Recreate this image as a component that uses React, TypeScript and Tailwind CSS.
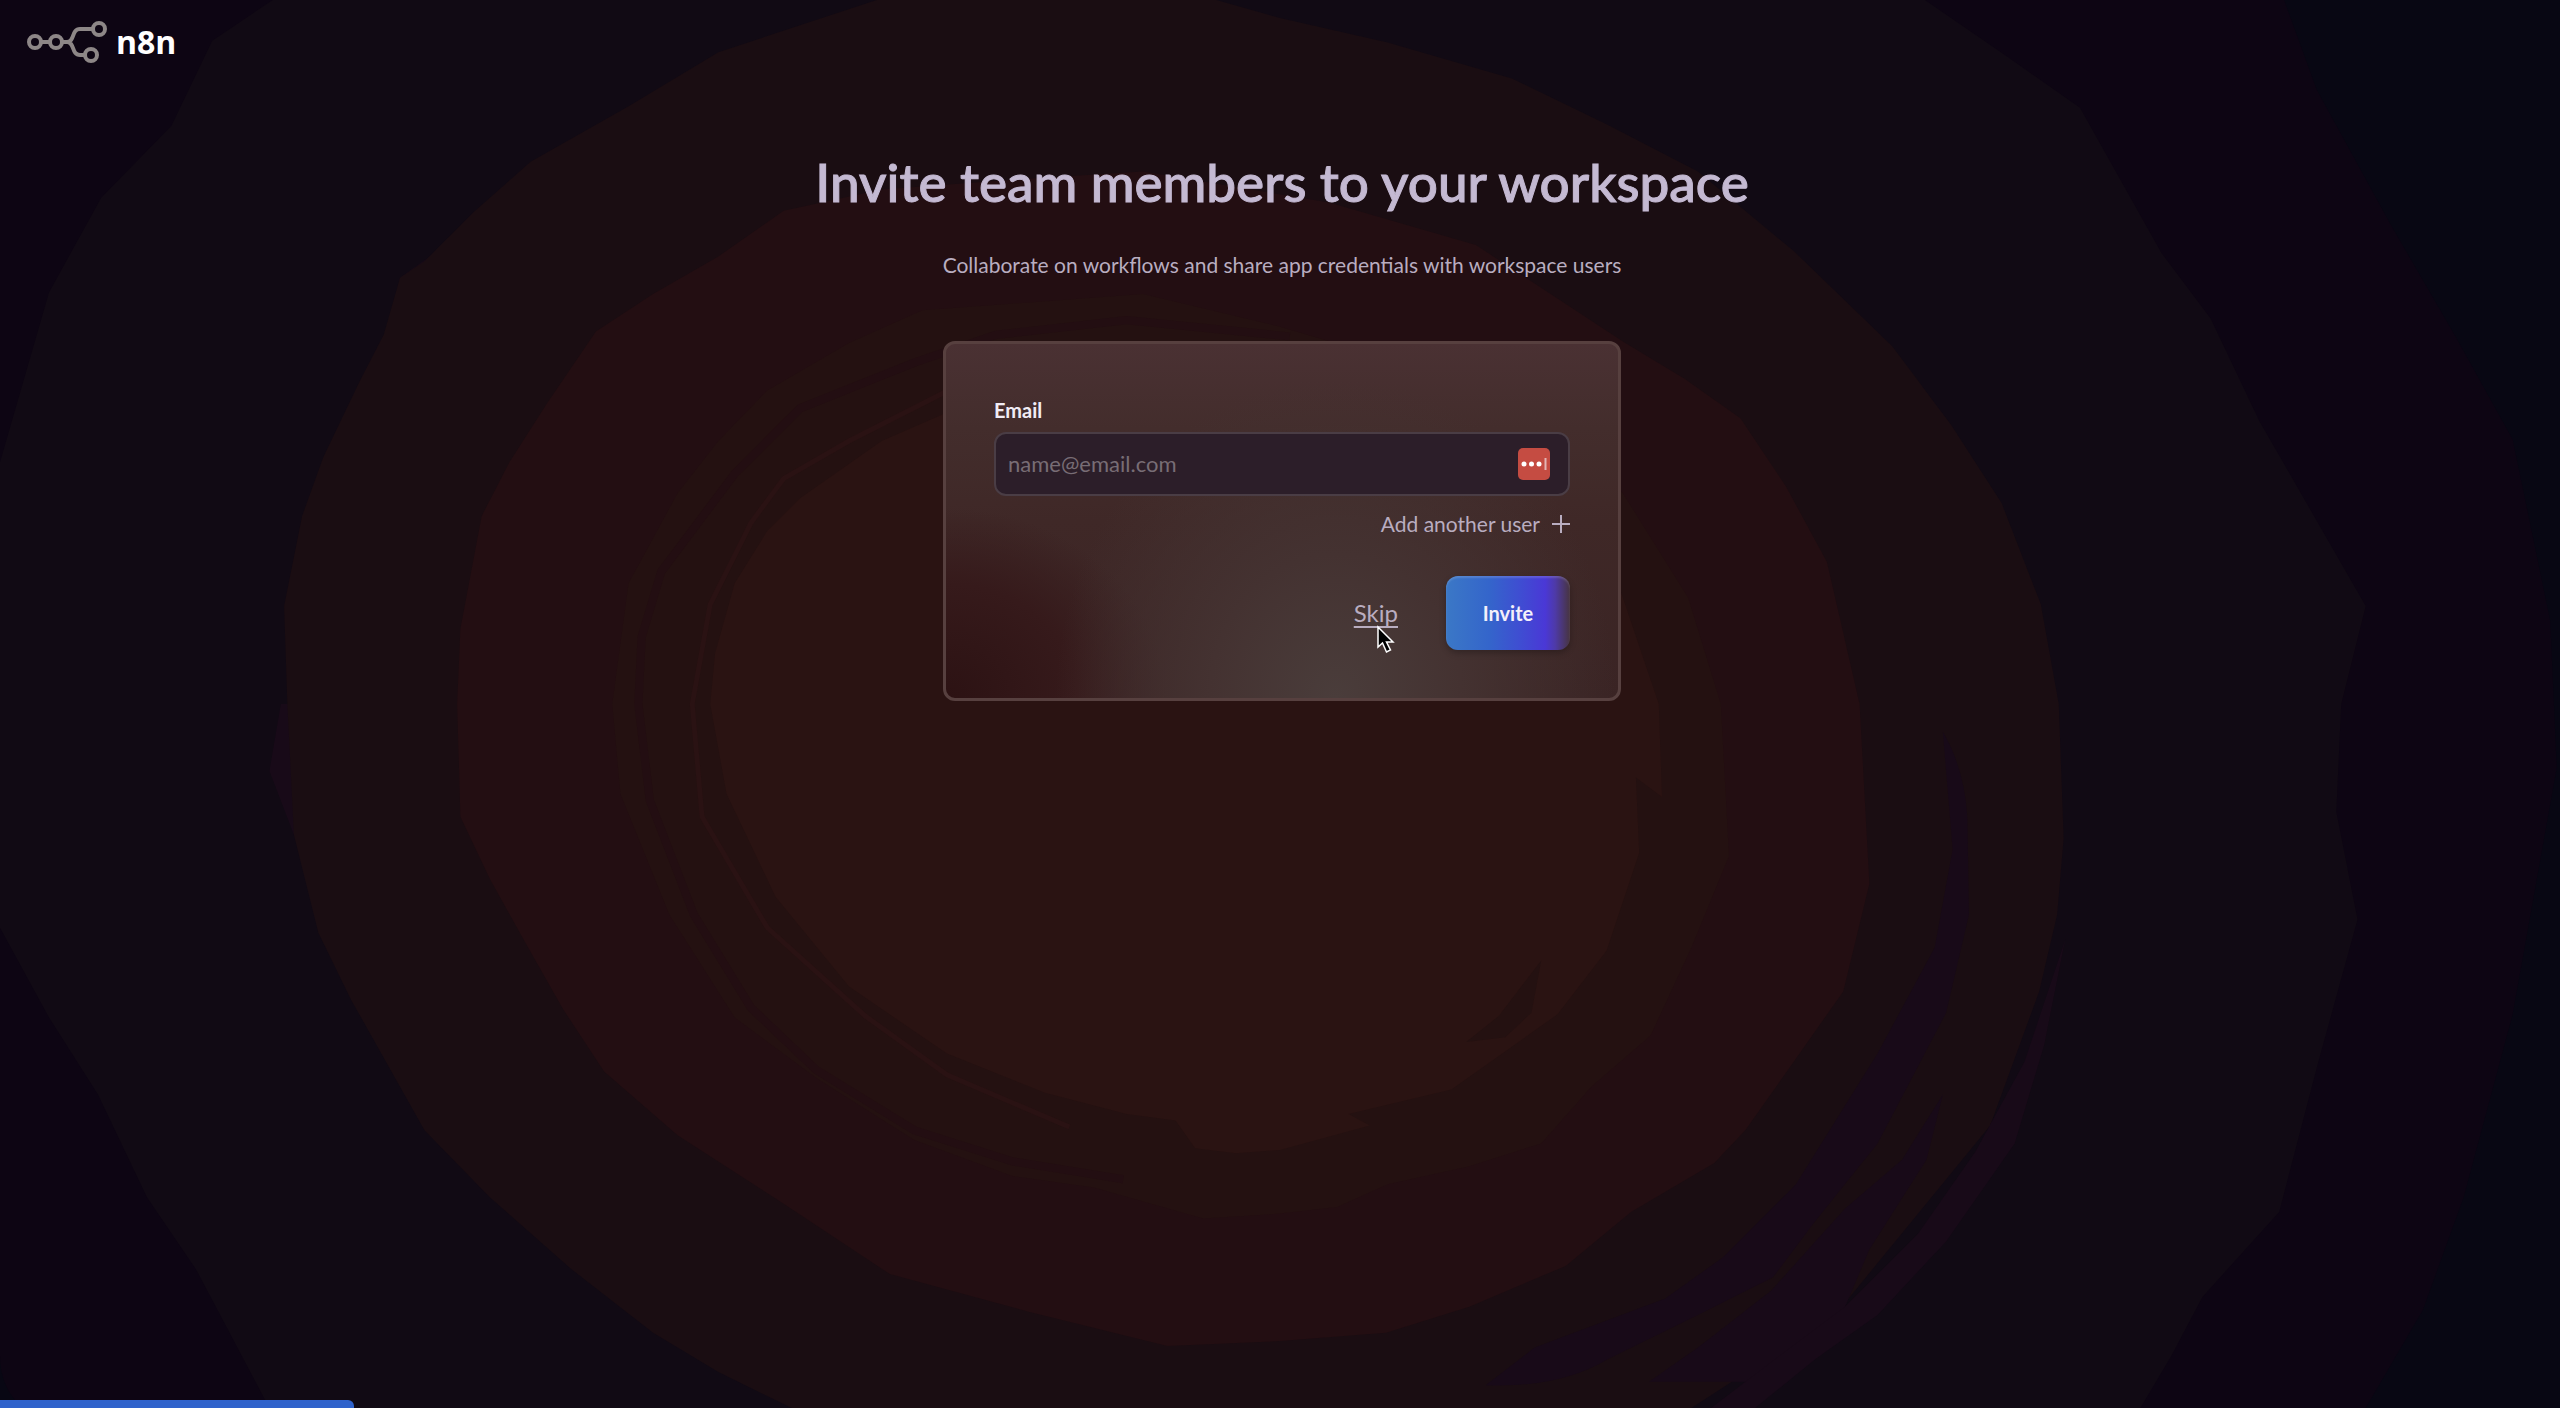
import { useState } from "react";

function Backdrop() {
  return (
    <svg
      className="absolute inset-0 -z-10 h-full w-full"
      viewBox="0 0 1568 862"
      preserveAspectRatio="none"
      aria-hidden="true"
    >
      <rect width="1568" height="862" fill="#080713" />
      <path
        fill="#0d0513"
        d="M0 0H1399L1419 55L1464 137L1504 206L1539 269L1562 380L1566 470L1539 621L1509 733L1484 802L1449 862H14Q0 850 0 830Z"
      />
      <path
        fill="#110a14"
        d="M167 0L130 25L105 77L62 121L30 179L0 283V568L30 623L60 670L90 733L120 777L165 862H1311L1330 830L1349 794L1396 742L1420 650L1444 563L1431 497L1434 431L1449 371L1384 258L1354 195L1324 155L1274 66L1230 35L1179 0Z"
      />
      <path
        fill="#180a18"
        d="M245 170L238 200L262 180L280 145ZM172 431L165 472L180 511L184 480L180 431Z"
      />
      <path
        fill="#1a0d12"
        d="M537 0L440 32L385 65L325 99L290 130L260 160L245 170L235 205L220 234L198 280L185 316L174 371L176 431L180 511L195 571L215 612L260 692L300 733L350 777L400 816L440 840L485 862H1036L1124 805L1174 744L1219 689L1249 607L1260 560L1264 513L1261 431L1250 370L1226 308L1195 260L1159 212L1099 154L1040 105L984 76L926 48L850 26L784 11L745 0Z"
      />
      <path
        fill="#180a18"
        d="M1190 448Q1203 470 1205 500L1206 560L1192 620L1150 700L1110 750L1086 782L1040 805L985 832Q955 850 910 848L940 825L1020 795L1055 770L1100 725L1150 645L1185 580L1196 520Z"
      />
      <path
        fill="#180a18"
        d="M1190 670L1180 710L1145 765L1128 805L1090 846H1010L1040 825L1085 790L1130 740L1165 710Z"
      />
      <path
        fill="#180a18"
        d="M1265 575L1252 640L1234 700L1192 760L1150 805L1112 832L1075 862H1048L1090 830L1130 800L1175 755L1210 705L1240 650Z"
      />
      <path
        fill="#230e12"
        d="M700 105L620 110L540 116L480 129L440 157L400 180L365 203L335 247L312 283L295 316L282 385L280 431L282 500L300 538L320 574L345 618L370 656L415 695L480 737L545 780L630 803L715 824L784 821L849 816L900 800L959 775L999 742L1050 712L1069 692L1129 607L1145 541L1139 431L1119 344L1094 298L1066 256L1032 232L994 209L904 150L814 124Z"
      />
      <path
        fill="#241111"
        d="M700 180L565 190L520 210L470 239L440 270L415 302L385 357L375 431L380 486L410 560L450 623L500 660L560 698L620 720L670 727L737 746L784 743L819 739L850 725L900 714L944 700L975 665L1011 634L1036 580L1059 524L1054 431L1034 366L994 302L920 240L784 200Z"
      />
      <path
        fill="none"
        stroke="#230e12"
        strokeWidth="5"
        d="M790 206L690 196L610 205L560 222L490 250L450 290L405 350L393 390L391 431L398 490L425 560L460 617L500 655L560 692L620 711L688 722"
      />
      <path
        fill="none"
        stroke="#2a1213"
        strokeWidth="3"
        d="M579 240L520 270L480 293L460 320L435 370L424 431L430 500L470 568L530 622L580 658L655 690"
      />
      <path
        fill="#2a1312"
        d="M579 253L540 270L490 305L470 325L450 357L438 400L435 431L445 486L475 549L520 604L580 645L640 669L690 682L720 686L732 703L757 706L784 704L839 689L826 682L889 667L954 621L984 582L1004 522L1002 476L1018 488L1016 431L992 360V240H579Z"
      />
      <path fill="#241111" d="M944 588L938 620L922 635L898 638L918 622Z" />
    </svg>
  );
}

function Logo() {
  return (
    <a href="#" className="flex items-center gap-2 text-white" aria-label="n8n">
      <svg width="82" height="44" viewBox="0 0 82 44" fill="none" stroke="#8d8787" strokeWidth="4">
        <circle cx="9" cy="22" r="6" />
        <circle cx="30" cy="22" r="6" />
        <circle cx="73" cy="9" r="6" />
        <circle cx="65" cy="35" r="6" />
        <path d="M15 22H24M36 22H41C49 22 45 9 54 9H67M41 22C49 22 45 35 54 35H59" />
      </svg>
      <span className="font-['Open_Sans',sans-serif] text-[32px] leading-10 font-bold">n8n</span>
    </a>
  );
}

function PasswordBadge() {
  return (
    <svg width="32" height="32" viewBox="0 0 32 32" aria-hidden="true">
      <rect width="32" height="32" rx="5" fill="#c54c42" />
      <circle cx="6" cy="16" r="2.5" fill="#fff" />
      <circle cx="13.5" cy="16" r="2.5" fill="#fff" />
      <circle cx="21" cy="16" r="2.5" fill="#fff" />
      <path d="M27.5 10V22" stroke="#e3b5b4" strokeWidth="2" />
    </svg>
  );
}

function Cursor() {
  return (
    <svg
      className="pointer-events-none absolute top-full left-1/2 -mt-1"
      width="20"
      height="30"
      viewBox="0 0 20 30"
      aria-hidden="true"
    >
      <path
        d="M2 2V22L6.5 18L10.5 27L14.5 25L10.5 17H17Z"
        fill="#000"
        stroke="#fff"
        strokeWidth="1.5"
      />
    </svg>
  );
}

function InviteForm() {
  const [emails, setEmails] = useState<string[]>([""]);

  const updateEmail = (index: number, value: string) => {
    setEmails(emails.map((email, i) => (i === index ? value : email)));
  };

  return (
    <form
      className="mt-[60px] w-[678px] max-w-full rounded-xl border-3 border-[#57403f] bg-[radial-gradient(ellipse_280px_320px_at_58%_100%,#4a3d3b_0%,#443231_45%,transparent_100%),radial-gradient(ellipse_220px_190px_at_0%_100%,#2c1213_0%,#361a1b_60%,transparent_100%),linear-gradient(to_bottom,#4a3133_0%,#432d2c_24%,#3f2827_50%,#3a2424_100%)] px-12 pt-[52px] pb-12"
      onSubmit={(e) => e.preventDefault()}
    >
      <label htmlFor="email-0" className="block text-xl leading-7 font-bold text-[#f1ecf5]">
        Email
      </label>
      <div className="mt-2 flex flex-col gap-3">
        {emails.map((email, index) => (
          <div
            key={index}
            className="flex h-16 items-center rounded-xl border-2 border-[#4a3d45] bg-[#2c1e29] pr-[18px] pl-3"
          >
            <input
              id={`email-${index}`}
              type="email"
              aria-label="Email"
              value={email}
              onChange={(e) => updateEmail(index, e.target.value)}
              placeholder="name@email.com"
              className="min-w-0 flex-1 bg-transparent text-[22px] leading-8 text-[#f1ecf5] outline-none placeholder:text-[#786d75]"
            />
            <PasswordBadge />
          </div>
        ))}
      </div>
      <div className="mt-3 flex justify-end">
        <button
          type="button"
          onClick={() => setEmails([...emails, ""])}
          className="flex items-center gap-3 text-[21px] leading-8 text-[#b9adc0]"
        >
          Add another user
          <svg width="18" height="18" viewBox="0 0 18 18" stroke="currentColor" strokeWidth="2">
            <path d="M9 0V18M0 9H18" />
          </svg>
        </button>
      </div>
      <div className="mt-9 flex items-center justify-end gap-12">
        <div className="relative">
          <button
            type="button"
            className="text-2xl leading-8 text-[#b9adc0] underline decoration-2 underline-offset-4"
          >
            Skip
          </button>
          <Cursor />
        </div>
        <button
          type="submit"
          className="h-[74px] w-[124px] rounded-xl bg-[linear-gradient(to_right,#3b78c6_0%,#3465cb_35%,#3f4dd2_60%,#4a38d6_80%,#4e3aa8_88%,#47343f_100%)] text-xl leading-7 font-bold text-[#f4f0fa] shadow-[inset_0_2px_2px_rgba(255,255,255,0.15),0_3px_6px_rgba(0,0,0,0.25)]"
        >
          Invite
        </button>
      </div>
    </form>
  );
}

export default function App() {
  return (
    <div className="relative isolate flex min-h-screen flex-col overflow-hidden font-[Lato,sans-serif]">
      <Backdrop />
      <header className="px-[26px] pt-5">
        <Logo />
      </header>
      <main className="flex flex-1 flex-col items-center pt-[84px] pl-1">
        <h1 className="text-center text-[53px] leading-[68px] font-medium text-[#c4b9d2] [-webkit-text-stroke:1px_#c4b9d2]">
          Invite team members to your workspace
        </h1>
        <p className="mt-[33px] text-center text-[21px] leading-8 text-[#b9adc0]">
          Collaborate on workflows and share app credentials with workspace users
        </p>
        <InviteForm />
      </main>
      <footer>
        <div className="h-2 w-[354px] rounded-tr-md bg-[#2f62cb]" />
      </footer>
    </div>
  );
}
